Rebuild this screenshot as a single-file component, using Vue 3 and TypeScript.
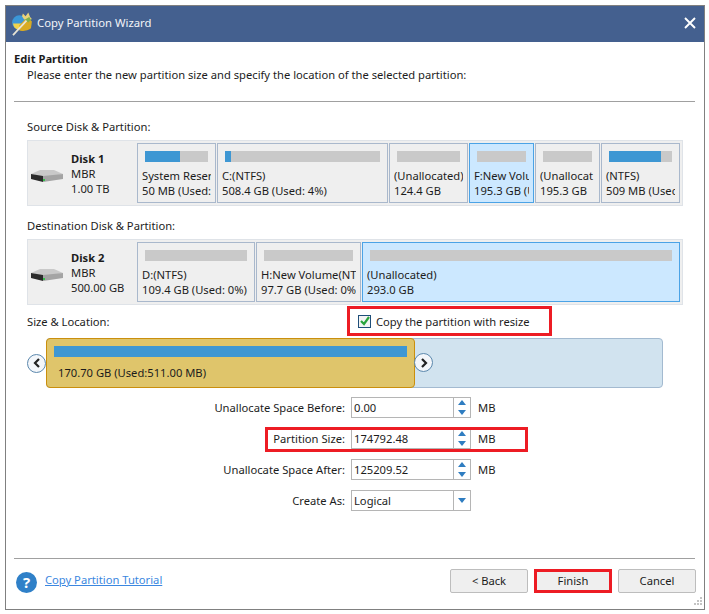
<script setup lang="ts">
interface Part { name: string; size: string; width: number; used: number; active?: boolean }
const source: Part[] = [
  { name: 'System Reser', size: '50 MB (Used:', width: 79, used: 55 },
  { name: 'C:(NTFS)', size: '508.4 GB (Used: 4%)', width: 171, used: 4 },
  { name: '(Unallocated)', size: '124.4 GB', width: 79, used: 0 },
  { name: 'F:New Volu', size: '195.3 GB (U', width: 65, used: 0, active: true },
  { name: '(Unallocat', size: '195.3 GB', width: 65, used: 0 },
  { name: '(NTFS)', size: '509 MB (Usec', width: 79, used: 83 },
]
const dest: Part[] = [
  { name: 'D:(NTFS)', size: '109.4 GB (Used: 0%)', width: 118, used: 0 },
  { name: 'H:New Volume(NT', size: '97.7 GB (Used: 0%)', width: 105, used: 0 },
  { name: '(Unallocated)', size: '293.0 GB', width: 318, used: 0, active: true },
]
const rows = [
  { label: 'Unallocate Space Before:', value: '0.00' },
  { label: 'Partition Size:', value: '174792.48', mark: true },
  { label: 'Unallocate Space After:', value: '125209.52' },
]
</script>

<template>
  <div class="window">
    <header class="titlebar">
      <svg class="logo" viewBox="0 0 24 30" width="24" height="27" aria-hidden="true">
        <circle cx="9" cy="15" r="8" fill="#3b97d8" />
        <path d="M2 16a8 8 0 0 0 7 7l6-7z" fill="#f1d34c" />
        <path d="M9 24c3 1 11 0 13-3l1-7-5-5-9 9z" fill="#d9ab22" />
        <path d="M13 5l3 3 3-4 2 5 2 2-5 3-4-3-2-3z" fill="#e9d27a" />
        <path d="M15 12l5-3 2 3-3 3z" fill="#7fb04a" />
        <path d="M2 29l15-16" stroke="#e8e4d4" stroke-width="2" fill="none" />
      </svg>
      <span class="title">Copy Partition Wizard</span>
      <svg class="close" viewBox="0 0 12 12" width="12" height="12" aria-hidden="true">
        <path d="M1 1l10 10M11 1L1 11" stroke="#fff" stroke-width="1.9" fill="none" />
      </svg>
    </header>

    <main class="body">
      <h1 class="heading">Edit Partition</h1>
      <p class="sub">Please enter the new partition size and specify the location of the selected partition:</p>
      <hr class="rule first" />

      <div class="label src-label">Source Disk &amp; Partition:</div>
      <section class="disk">
        <div class="disk-info">
          <svg class="drive" viewBox="0 0 33 14" width="33" height="14" aria-hidden="true">
            <path d="M0 5l9-4h14l9 4v0l-9 2H9z" fill="#c9c9c9" />
            <path d="M0 5l12 2v6L0 10z" fill="#2b2b2b" />
            <path d="M12 7l20-2v5l-20 3z" fill="#a4a4a4" />
            <rect x="12" y="10" width="2" height="2" fill="#35c24a" />
          </svg>
          <div class="disk-text"><b>Disk 1</b><span>MBR</span><span>1.00 TB</span></div>
        </div>
        <div class="parts">
          <div v-for="p in source" :key="p.name + p.size" class="part" :class="{ active: p.active }" :style="{ width: p.width + 'px' }">
            <div class="bar"><div class="fill" :style="{ width: p.used + '%' }"></div></div>
            <div class="part-text">{{ p.name }}</div>
            <div class="part-text">{{ p.size }}</div>
          </div>
        </div>
      </section>

      <div class="label dst-label">Destination Disk &amp; Partition:</div>
      <section class="disk">
        <div class="disk-info">
          <svg class="drive" viewBox="0 0 33 14" width="33" height="14" aria-hidden="true">
            <path d="M0 5l9-4h14l9 4v0l-9 2H9z" fill="#c9c9c9" />
            <path d="M0 5l12 2v6L0 10z" fill="#2b2b2b" />
            <path d="M12 7l20-2v5l-20 3z" fill="#a4a4a4" />
            <rect x="12" y="10" width="2" height="2" fill="#35c24a" />
          </svg>
          <div class="disk-text"><b>Disk 2</b><span>MBR</span><span>500.00 GB</span></div>
        </div>
        <div class="parts">
          <div v-for="p in dest" :key="p.name" class="part" :class="{ active: p.active }" :style="{ width: p.width + 'px' }">
            <div class="bar"><div class="fill" :style="{ width: p.used + '%' }"></div></div>
            <div class="part-text">{{ p.name }}</div>
            <div class="part-text">{{ p.size }}</div>
          </div>
        </div>
      </section>

      <div class="size-head">
        <div class="label">Size &amp; Location:</div>
        <label class="resize">
          <span class="check">
            <svg viewBox="0 0 10 10" width="10" height="10" aria-hidden="true">
              <path d="M1 5l3 3 5-7" stroke="#2aa43c" stroke-width="2.2" fill="none" />
            </svg>
          </span>
          Copy the partition with resize
        </label>
      </div>

      <div class="slider">
        <button class="round" aria-label="Move left">
          <svg viewBox="0 0 8 10" width="8" height="10"><path d="M6 1L2 5l4 4" stroke="#222" stroke-width="2.2" fill="none" /></svg>
        </button>
        <div class="track">
          <div class="used-block">
            <div class="used-bar"></div>
            <div class="used-text">170.70 GB (Used:511.00 MB)</div>
          </div>
          <button class="round right" aria-label="Move right">
            <svg viewBox="0 0 8 10" width="8" height="10"><path d="M2 1l4 4-4 4" stroke="#222" stroke-width="2.2" fill="none" /></svg>
          </button>
        </div>
      </div>

      <div class="form">
        <div v-for="r in rows" :key="r.label" class="row" :class="{ mark: r.mark }">
          <span class="row-label">{{ r.label }}</span>
          <div class="spin">
            <span class="value">{{ r.value }}</span>
            <span class="arrows">
              <i class="up"></i>
              <i class="down"></i>
            </span>
          </div>
          <span class="unit">MB</span>
        </div>
        <div class="row">
          <span class="row-label">Create As:</span>
          <div class="spin">
            <span class="value">Logical</span>
            <span class="arrows single"><i class="down"></i></span>
          </div>
        </div>
      </div>

      <hr class="rule foot-rule" />
      <footer class="footer">
        <span class="help">?</span>
        <a class="link" href="#">Copy Partition Tutorial</a>
        <div class="buttons">
          <button class="btn">&lt; Back</button>
          <button class="btn finish">Finish</button>
          <button class="btn">Cancel</button>
        </div>
      </footer>
    </main>
    <svg class="grip" viewBox="0 0 8 8" width="8" height="8" aria-hidden="true">
      <g fill="#c4c4c4">
        <rect x="6" y="0" width="2" height="2" />
        <rect x="3" y="3" width="2" height="2" />
        <rect x="6" y="3" width="2" height="2" />
        <rect x="0" y="6" width="2" height="2" />
        <rect x="3" y="6" width="2" height="2" />
        <rect x="6" y="6" width="2" height="2" />
      </g>
    </svg>
  </div>
</template>

<style>
html, body { margin: 0; background: #fff; }
</style>

<style scoped>
.window {
  position: relative;
  box-sizing: border-box;
  width: 700px;
  height: 605px;
  margin: 5px 0 0 5px;
  border: 1px solid #808080;
  background: #fff;
  font-family: "Noto Sans", "Open Sans", sans-serif;
  font-size: 11.2px;
  line-height: 15px;
  color: #1c1c1c;
}
.titlebar {
  box-sizing: border-box;
  display: flex;
  align-items: center;
  height: 36px;
  padding-bottom: 3px;
  background: #44608f;
  color: #fff;
}
.logo { margin-left: 4px; flex: none; }
.title { margin-left: 3px; font-size: 11.3px; color: #f2f4f8; }
.close { margin-left: auto; margin-right: 8px; }
.body { padding: 9px 9px 0 8px; }
.heading { margin: 0; font-size: 11.2px; line-height: 15px; font-weight: 700; }
.sub { margin: 1px 0 0 13px; }
.rule { border: 0; height: 1px; background: #a0a0a0; margin: 0; width: 681px; }
.rule.first { margin-top: 19px; }
.label { margin-left: 13px; }
.src-label { margin-top: 17px; }
.dst-label { margin-top: 12px; }
.disk {
  display: flex;
  box-sizing: border-box;
  width: 656px;
  margin: 6px 0 0 13px;
  padding: 2px 2px 2px 0;
  background: #efefef;
  border: 1px solid #dfe3e8;
}
.disk-info {
  display: flex;
  align-items: center;
  width: 109px;
  flex: none;
}
.drive { margin-left: 3px; margin-top: 6px; flex: none; }
.disk-text { display: flex; flex-direction: column; margin-left: 7px; }
.parts { display: flex; gap: 1px; }
.part {
  box-sizing: border-box;
  height: 60px;
  flex: none;
  border: 1px solid #a9b8cc;
  padding: 7px 4px 0;
  overflow: hidden;
  background: #efefef;
}
.part.active { background: #cce8ff; border-color: #4ba3e6; }
.bar { height: 11px; margin: 0 3px; background: #c9c9c9; }
.fill { height: 100%; background: #3e97d3; }
.part-text { white-space: nowrap; overflow: hidden; }
.bar + .part-text { margin-top: 6px; }
.size-head { display: flex; align-items: center; height: 30px; margin-top: 1px; }
.size-head .label { width: 320px; flex: none; }
.resize {
  box-sizing: border-box;
  display: flex;
  align-items: center;
  width: 205px;
  height: 30px;
  border: 3px solid #ed1c24;
  padding-left: 8px;
  gap: 5px;
  white-space: nowrap;
}
.check {
  box-sizing: border-box;
  display: flex;
  align-items: center;
  justify-content: center;
  width: 13px;
  height: 13px;
  border: 1px solid #1f4e79;
  background: #f4f4f4;
}
.slider { display: flex; align-items: center; margin: 2px 0 0 13px; }
.round {
  box-sizing: border-box;
  display: flex;
  align-items: center;
  justify-content: center;
  width: 19px;
  height: 19px;
  padding: 0;
  border: 1px solid #5b88ad;
  border-radius: 50%;
  background: #f3f6fa;
  flex: none;
}
.track {
  position: relative;
  box-sizing: border-box;
  width: 617px;
  height: 50px;
  background: #d1e3ef;
  border: 1px solid #a3bad0;
  border-radius: 4px;
}
.used-block {
  box-sizing: border-box;
  width: 369px;
  height: 50px;
  margin: -1px;
  padding: 7px 7px 0;
  background: #dfc56b;
  border: 1px solid #ca8f0d;
  border-radius: 4px;
}
.used-bar { height: 11px; background: #3e97d3; }
.used-text { margin: 8px 0 0 4px; }
.right { position: absolute; left: 367px; top: 14px; }
.form { margin-top: 9px; }
.row {
  position: relative;
  display: flex;
  align-items: center;
  height: 21px;
  margin-bottom: 10px;
}
.row-label { width: 331px; text-align: right; flex: none; }
.row.mark::before {
  content: "";
  position: absolute;
  left: 251px;
  top: -1px;
  width: 263px;
  height: 25px;
  box-sizing: border-box;
  border: 3px solid #ed1c24;
}
.spin {
  box-sizing: border-box;
  display: flex;
  width: 120px;
  height: 21px;
  margin-left: 6px;
  border: 1px solid #b5b5b5;
  background: #fff;
}
.value { flex: 1; padding-left: 2px; line-height: 19px; }
.arrows {
  display: flex;
  flex-direction: column;
  align-items: center;
  justify-content: space-around;
  width: 16px;
  border-left: 1px solid #b5b5b5;
}
.arrows i { display: block; width: 0; height: 0; border-left: 4.5px solid transparent; border-right: 4.5px solid transparent; }
.arrows .up { border-bottom: 5px solid #2f7dc1; }
.arrows .down { border-top: 5px solid #2f7dc1; }
.arrows.single { justify-content: center; }
.unit { margin-left: 7px; }
.foot-rule { margin-top: 47px; }
.footer { display: flex; align-items: center; margin-top: 9px; height: 25px; }
.help {
  display: flex;
  align-items: center;
  justify-content: center;
  width: 21px;
  height: 21px;
  margin: 4px 0 0 2px;
  border-radius: 50%;
  background: #2f80c8;
  color: #fff;
  font-weight: 700;
  font-size: 15px;
  flex: none;
}
.link { margin-left: 8px; color: #3b87e0; text-decoration: underline; margin-top: -2px; }
.buttons { display: flex; margin-left: auto; margin-right: -1px; gap: 6px; }
.btn {
  box-sizing: border-box;
  width: 78px;
  height: 24px;
  padding: 0;
  border: 1px solid #bdbdbd;
  border-radius: 2px;
  background: #efefef;
  font: inherit;
  color: #1c1c1c;
}
.finish { border: 3px solid #ed1c24; border-radius: 0; }
.grip { position: absolute; right: 2px; bottom: 4px; }
</style>
